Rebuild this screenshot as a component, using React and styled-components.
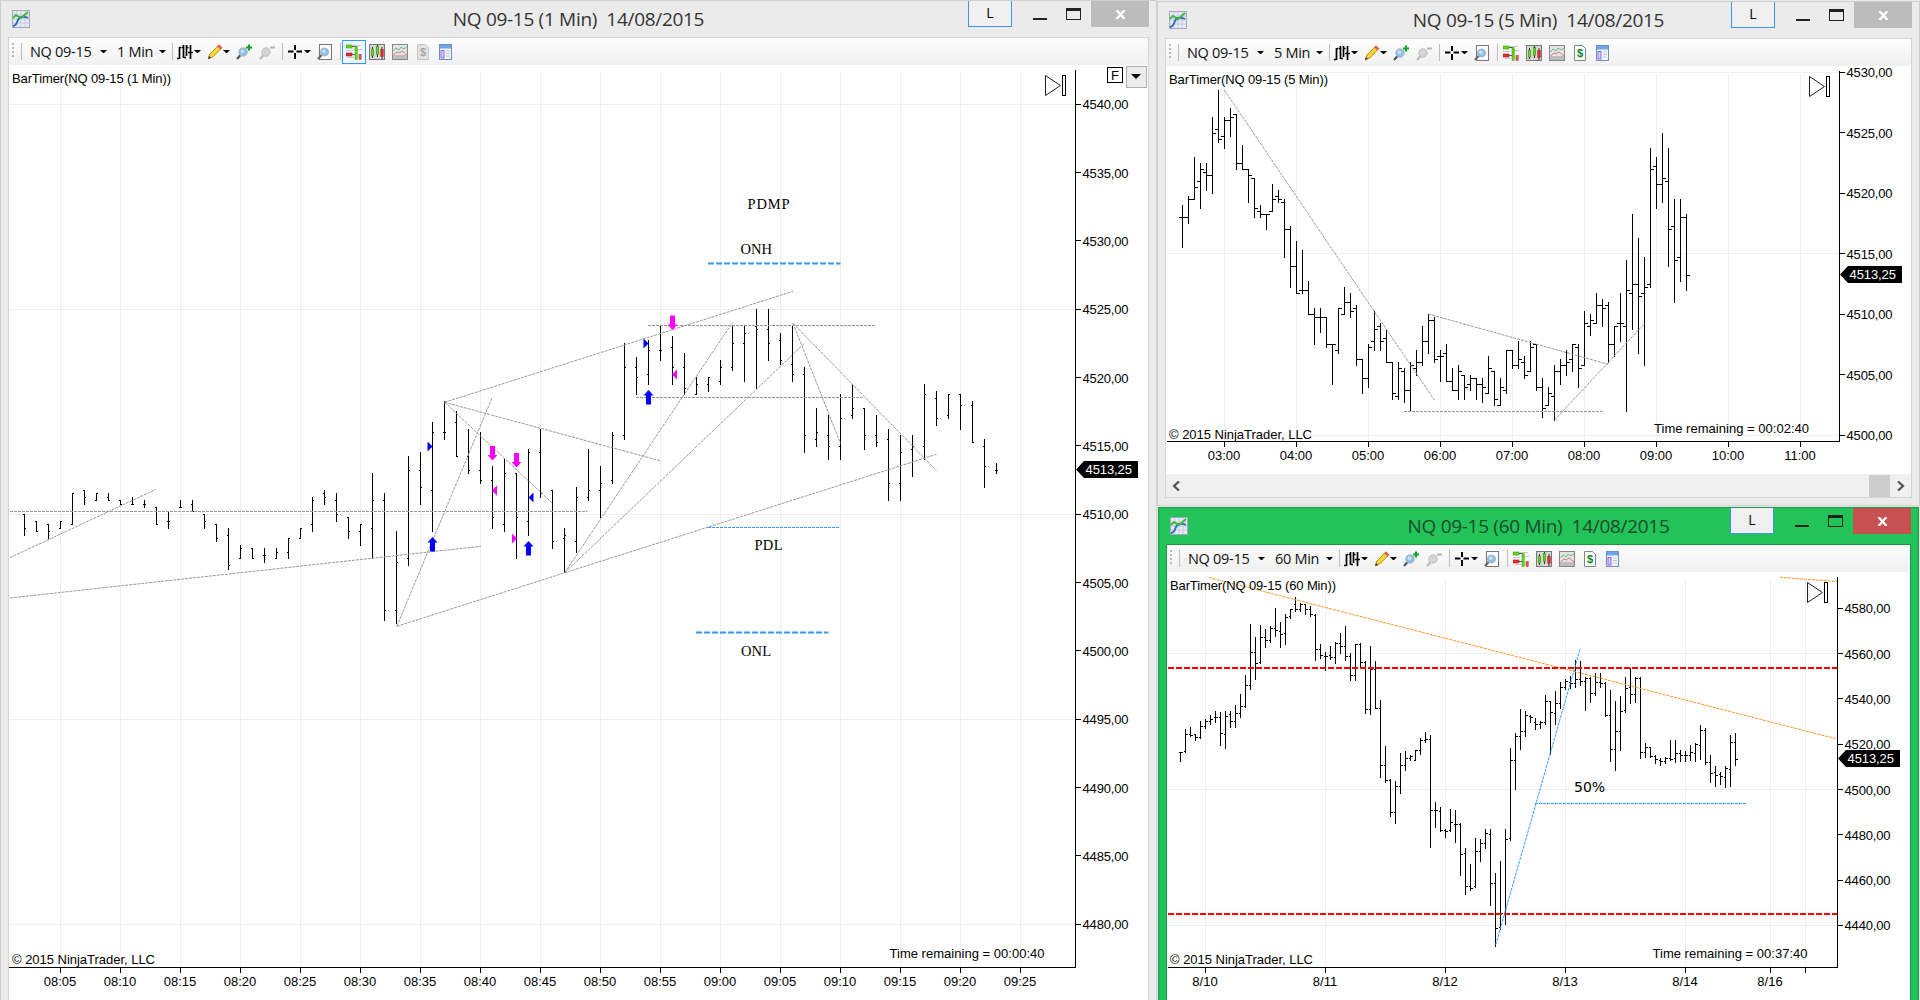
import React from "react"

import styled, { createGlobalStyle, css } from "styled-components"

/* bars are [high, low, open, close] */

// points above / below 4510
const bars1 = [
  [0, -1.5, 0, -1], [-0.5, -1.25, -0.5, -1.25], [-0.75, -1.75, -0.75, -1.25], [-0.5, -1, -1, -0.5],
  [1.5, -0.75, -0.75, 1.5], [1.75, 0.75, 1.75, 1.25], [1.5, 1, 1, 1.5], [1.5, 1, 1.25, 1],
  [1, 0.75, 1, 0.75], [1.25, 0.75, 0.75, 0.75], [1, 0.5, 0.75, 0.75], [0.5, -0.75, 0.5, -0.75],
  [0.25, -1, -0.5, -0.5], [1, 0.5, 0.5, 0.5], [1, 0.25, 0.75, 0.25], [0, -1, 0, -0.5],
  [-0.75, -2, -0.75, -1.75], [-1, -4, -1.5, -3.75], [-2.25, -3.25, -3.25, -2.5], [-2.5, -3.25, -2.5, -3.25],
  [-2.5, -3.5, -3, -3], [-2.5, -3.25, -3.25, -2.75], [-1.75, -3.25, -2.75, -1.75], [-1, -1.75, -1.75, -1],
  [1.25, -1.25, -0.75, 1], [1.75, 0.75, 1.5, 1.25], [1.5, -0.5, 1, 0], [-0.25, -1.75, -0.25, -1.25],
  [-0.75, -2.25, -1.25, -0.75], [3, -3.25, -1, 1], [1.5, -7.75, 1, -7], [-1.25, -8, -7, -3.5],
  [4.25, -3.75, -3.25, 3.25], [4.5, 0.75, 3.25, 2], [6.75, -1.25, 1.75, 6], [8.25, 5.5, 6, 6],
  [7.5, 4.25, 6.75, 4.25], [6.25, 3, 4.25, 3.25], [6, 2.25, 3.25, 2.5], [3.5, -1, 2.5, -0.25],
  [4, -1.25, -0.75, 3], [3, -3.25, 3, -0.25], [4.75, -1.5, -0.5, 4.5], [6.25, 1.25, 4.5, 1.5],
  [1.75, -2.5, 1.75, -2], [-1, -4.25, -1.75, -1.5], [2, -2.75, -2, 1.25], [4.75, 1, 1.25, 1.75],
  [3.5, -0.25, 1.75, 2.25], [6, 2.25, 2.5, 5.75], [12.5, 5.5, 5.75, 10.75], [11.5, 8.75, 10.75, 10],
  [12.75, 9.5, 10.25, 12], [13.75, 11.25, 12, 12], [13, 9.5, 12.25, 10.75], [11.75, 8.75, 10.75, 9.25],
  [10, 8.75, 8.75, 9.5], [10, 9, 9.5, 10], [11.25, 9.5, 9.75, 10.75], [13.75, 10.5, 10.75, 12.5],
  [13.75, 9.75, 12.5, 13.25], [15, 9.25, 13.75, 13.5], [15, 11.25, 13.5, 12.5], [13.25, 11, 12.75, 11.25],
  [13.75, 9.75, 11, 10.25], [10.75, 4.5, 10.25, 5.75], [7.75, 5, 5.5, 6], [7.25, 4, 5.75, 5],
  [8.75, 4, 5, 7], [9.5, 7, 7.25, 7.75], [7.75, 4.75, 7.75, 5.75], [7.25, 5, 5.75, 5.25],
  [6.25, 1, 5.5, 2.25], [5.75, 1, 2.25, 4.5], [5.75, 2.75, 4.75, 5], [9.5, 4, 5, 8.75],
  [9, 6.5, 8.5, 7], [8.75, 7, 7.25, 8.75], [8.75, 6.25, 8.75, 8], [8.25, 5.25, 8, 5.25],
  [5.5, 2, 5, 3.5], [3.75, 3, 3.25, 3.25],
]

// points above 4500
const bars5 = [
  [19, 15.5, 18, 18], [19.75, 17.5, 18, 19.5], [23, 19.5, 19.5, 20.5], [22.5, 18.75, 21, 22],
  [22.5, 20.25, 21.75, 21.5], [26.25, 20, 21.5, 25], [28.5, 24.25, 25.25, 24.5], [26.25, 23.75, 24.75, 26],
  [27, 24.75, 26, 26.25], [26.5, 22, 26.5, 22.5], [24, 22, 22.5, 22], [22, 19.25, 22, 21.5],
  [21.25, 18, 21.25, 18.75], [19, 18, 18.5, 18.25], [18.25, 17, 18.25, 18.25], [20.75, 18.5, 18.5, 19.5],
  [20.25, 19.25, 19.75, 19.5], [19.5, 14.75, 19.25, 17], [17.25, 12.25, 17, 14], [16, 11.75, 14, 11.75],
  [15.25, 11.75, 12, 12], [12.75, 10, 12, 10], [10.5, 7.5, 10, 9.75], [10.5, 8.5, 9.75, 9.75],
  [9.75, 7.25, 9.75, 7.5], [7.5, 4.25, 7.5, 7.5], [10.5, 6.75, 7, 10.5], [12.25, 10, 10, 11],
  [11.75, 9.75, 11, 10.25], [10.75, 5.75, 10.5, 6.25], [6.25, 3.5, 6.25, 4.75], [7.5, 4, 4.75, 7.25],
  [10.25, 7, 7.75, 8.75], [9.25, 7, 9, 7.75], [8.75, 6, 8, 6], [6, 3, 6, 3.5],
  [6, 3, 3.25, 5.5], [5.5, 2.75, 5.25, 3.75], [6, 2, 3.75, 5.75], [7, 5, 5.5, 6],
  [9, 5.75, 6, 7.75], [10, 6.75, 7.75, 9.5], [9.75, 6, 9.5, 6.25], [7, 4.5, 6.5, 6.5],
  [7.5, 4.5, 6.75, 4.5], [5.5, 3.75, 4.5, 3.75], [5.75, 3, 3.75, 5.25], [5, 3, 5, 4],
  [5, 3.75, 4.25, 4.75], [4.75, 3, 4.75, 4.25], [4.75, 2.75, 4.25, 4], [6.5, 3.5, 3.5, 5.5],
  [5.25, 2.5, 5.25, 3], [4.75, 2.5, 2.5, 4], [7, 3.5, 3.75, 7], [7, 5.5, 7, 5.75],
  [7.75, 5.5, 5.75, 6.25], [6.5, 4.75, 6, 5], [7.75, 5.25, 5.25, 7.25], [7.5, 3.75, 7.5, 4],
  [4.75, 1.5, 4, 2.25], [4, 2.5, 2.5, 3.5], [5.75, 1.25, 3.25, 5.25], [6.25, 4.25, 5.25, 5.75],
  [7, 5, 5.75, 6], [7.5, 5.25, 6.25, 7.5], [7.5, 4, 7.25, 5.5], [10.25, 5.75, 5.75, 9.25],
  [10, 8.25, 9, 9.5], [11.75, 9.25, 9.25, 10.75], [11.25, 9, 10.75, 10.5], [11, 6, 10.75, 7.5],
  [9, 6.5, 7.5, 9], [11.75, 7.75, 9.25, 9.25], [14.5, 2, 9, 12], [18.25, 8.75, 11.75, 12.5],
  [16.25, 6.75, 12.5, 11.5], [14.75, 5.75, 11.75, 12.25], [23.75, 12.25, 12.5, 22], [23, 18.75, 22.25, 20.75],
  [25, 19.25, 20.75, 21.25], [23.75, 14, 21, 17], [19.5, 11, 17.25, 14.5], [19.5, 12.75, 14.75, 18],
  [18.25, 12, 18, 13.25],
]

// offsets from the top of the plot, in thirds of a pixel
const bars60 = [
  [515, 542, 517, 515], [447, 517, 512, 463], [441, 467, 463, 465], [463, 479, 463, 472],
  [423, 473, 472, 439], [417, 443, 438, 422], [405, 433, 422, 416], [393, 425, 412, 411],
  [396, 494, 411, 460], [394, 503, 463, 409], [394, 441, 403, 424], [376, 441, 424, 400],
  [343, 411, 400, 377], [285, 380, 379, 316], [132, 326, 316, 217], [171, 296, 217, 250],
  [135, 248, 247, 170], [147, 200, 170, 181], [138, 185, 181, 145], [85, 167, 145, 150],
  [126, 200, 152, 162], [102, 192, 160, 110], [88, 113, 109, 88], [52, 93, 72, 86],
  [69, 93, 86, 73], [72, 101, 73, 86], [78, 107, 86, 103], [102, 239, 106, 206],
  [192, 233, 206, 226], [217, 269, 227, 227], [197, 238, 226, 232], [187, 248, 230, 190],
  [160, 218, 190, 198], [138, 239, 199, 229], [219, 299, 229, 286], [192, 299, 286, 193],
  [188, 262, 193, 247], [243, 398, 247, 388], [199, 401, 388, 267], [243, 385, 267, 385],
  [361, 590, 385, 556], [498, 607, 556, 601], [597, 707, 600, 697], [603, 728, 697, 619],
  [519, 638, 619, 556], [513, 569, 556, 535], [526, 539, 535, 528], [511, 541, 541, 511],
  [475, 523, 511, 480], [457, 487, 480, 478], [464, 800, 478, 691], [667, 740, 691, 691],
  [681, 753, 694, 751], [747, 772, 751, 753], [686, 752, 751, 727], [690, 785, 732, 733],
  [730, 885, 733, 823], [805, 941, 820, 919], [853, 929, 919, 923], [775, 922, 919, 814],
  [777, 842, 814, 788], [747, 805, 788, 760], [747, 974, 763, 910], [880, 1097, 910, 1043],
  [843, 1047, 1041, 998], [747, 1031, 998, 778], [504, 779, 775, 541], [460, 627, 541, 469],
  [387, 506, 469, 454], [393, 467, 454, 406], [405, 425, 409, 410], [414, 448, 427, 433],
  [424, 443, 433, 425], [345, 431, 425, 364], [363, 522, 364, 397], [333, 432, 400, 370],
  [306, 384, 370, 322], [297, 327, 322, 304], [288, 323, 306, 310], [240, 320, 310, 298],
  [243, 315, 298, 303], [292, 390, 303, 295], [291, 365, 295, 340], [279, 345, 340, 307],
  [279, 321, 307, 310], [306, 407, 310, 406], [330, 543, 404, 506], [363, 570, 508, 454],
  [348, 510, 454, 394], [291, 396, 391, 325], [265, 369, 322, 343], [291, 365, 343, 295],
  [291, 533, 295, 515], [489, 530, 515, 502], [500, 530, 502, 529], [526, 548, 529, 538],
  [534, 554, 540, 544], [532, 549, 542, 534], [480, 539, 534, 537], [480, 546, 535, 520],
  [510, 542, 520, 525], [514, 543, 525, 526], [495, 540, 526, 517], [489, 543, 520, 493],
  [435, 537, 496, 451], [444, 552, 451, 547], [525, 606, 547, 580], [558, 617, 577, 584],
  [576, 612, 582, 589], [558, 620, 591, 565], [465, 617, 568, 487], [459, 554, 487, 538],
]

const range = (from, to, step) => {
  const out = []
  for (let v = from; v <= to; v += step) out.push(v)
  return out
}

const clock = mins =>
  `${String(Math.floor(mins / 60)).padStart(2, "0")}:${String(mins % 60).padStart(2, "0")}`

const GREY = "#999"
const BLUE = "#3399ff"
const ORANGE = "#ff9420"

const charts = {
  one: {
    origin: [9, 65],
    size: [1139, 935],
    axis: { x: 1075, y: 967, top: 70, left: 9 },
    gridTop: 73,
    gridX: range(60, 1020, 60),
    gridY: [104, 309, 514, 719, 924],
    times: range(0, 16, 1).map(i => [60 + i * 60, clock(485 + i * 5)]),
    prices: range(0, 12, 1).map(i => [104.3 + i * 68.33, `${4540 - i * 5},00`]),
    flagY: 469.5,
    title: [12, 83, 159],
    copy: [12, 964],
    timer: [889.5, 958, "00:00:40"],
    play: [1045, 75],
    bars: bars1,
    start: 24,
    step: 12,
    ticks: [1, 1],
    toY: v => 514 - v * 13.667,
    lines: [
      [10, 557.7, 156, 489.3], [10, 598, 481, 546.3], [10, 511.5, 587.5, 511.5],
      [444.6, 402.3, 793, 291.3], [444.6, 402.3, 660, 460.7], [444.6, 402.3, 552.5, 503.3],
      [396.8, 626.3, 492, 398], [396.8, 626.3, 936.6, 454.3],
      [564.7, 572.7, 732.6, 322.3], [564.7, 572.7, 804.5, 343.3],
      [648, 325.5, 876, 325.5], [636, 397.5, 864, 397.5],
      [793, 323.3, 840.5, 443.3], [793, 323.3, 936.6, 470.7],
      [708, 527.5, 840, 527.5, BLUE],
      [708, 263.5, 840.5, 263.5, BLUE, 2], [696, 632.5, 828.5, 632.5, BLUE, 2],
    ],
  },
  five: {
    origin: [1166, 66],
    size: [746, 408],
    axis: { x: 1839, y: 441, top: 71, left: 1167 },
    gridTop: 74,
    gridX: range(1224, 1800, 72),
    gridY: [72, 253, 435],
    times: range(0, 8, 1).map(i => [1224 + i * 72, clock((3 + i) * 60)]),
    prices: range(0, 6, 1).map(i => [72.3 + i * 60.5, `${4530 - i * 5},00`]),
    flagY: 274.5,
    title: [1169, 84, 159],
    copy: [1169, 438.5],
    timer: [1654, 432.5, "00:02:40"],
    play: [1809, 76],
    bars: bars5,
    start: 1182,
    step: 6,
    ticks: [3, 3],
    toY: v => 435 - v * 12.1,
    lines: [
      [1224.3, 90, 1434.3, 400], [1428.3, 314, 1608.3, 364.3],
      [1404, 411.5, 1602.5, 411.5], [1554.3, 420.3, 1644.7, 323.3],
    ],
  },
  sixty: {
    origin: [1167, 572],
    size: [743, 428],
    axis: { x: 1837, y: 967, top: 577, left: 1168 },
    gridTop: 580,
    gridX: [1205, 1325, 1445, 1565, 1685, 1770, 1805],
    gridY: [653, 789, 925],
    times: [
      [1205, "8/10"], [1325, "8/11"], [1445, "8/12"], [1565, "8/13"],
      [1685, "8/14"], [1770, "8/16"], [1805, ""],
    ],
    prices: range(0, 7, 1).map(i => [608.3 + i * 45.3, `${4580 - i * 20},00`]),
    flagY: 758.5,
    title: [1170, 590, 166],
    copy: [1170, 964],
    timer: [1652.5, 958, "00:37:40"],
    play: [1807, 582],
    bars: bars60,
    start: 1180,
    step: 5,
    ticks: [1, 2],
    toY: v => 580 + v / 3,
    lines: [
      [1209, 577.5, 1837, 739, ORANGE], [1780, 577.3, 1837, 581.5, ORANGE],
      [1168, 668, 1837, 668, "#ff0000", 2], [1168, 914, 1837, 914, "#ff0000", 2],
      [1495.7, 944.7, 1580.3, 648.3, BLUE], [1535, 803.5, 1746, 803.5, BLUE],
    ],
  },
}

/* ohlc bars as a single path */
const barPath = ({ bars, start, step, ticks, toY }) =>
  bars
    .map(([h, l, o, c], i) => {
      const x = start + i * step
      const [yh, yl, yo, yc] = [h, l, o, c].map(v => Math.round(toY(v)))
      return `M${x + 0.5} ${yh}V${yl + 1}M${x - ticks[0]} ${yo + 0.5}H${x}M${x + 1} ${yc + 0.5}h${ticks[1]}`
    })
    .join("")

const Chart = ({ chart, period, children }) => {
  const { origin, size, axis, title, copy, timer, play, flagY } = chart
  return (
    <Plot width={size[0]} height={size[1]} viewBox={`${origin[0]} ${origin[1]} ${size[0]} ${size[1]}`}>
      <g stroke="#efefef" shapeRendering="crispEdges">
        {chart.gridX.map(x => (
          <line key={x} x1={x + 0.5} x2={x + 0.5} y1={chart.gridTop} y2={axis.y} />
        ))}
        {chart.gridY.map(y => (
          <line key={y} x1={axis.left + 1} x2={axis.x} y1={y + 0.5} y2={y + 0.5} />
        ))}
      </g>
      <path d={barPath(chart)} stroke="#000" fill="none" shapeRendering="crispEdges" />
      {chart.lines.map(([x1, y1, x2, y2, color = GREY, width = 1], i) => (
        <line
          key={i}
          x1={x1}
          y1={y1}
          x2={x2}
          y2={y2}
          stroke={color}
          strokeWidth={width}
          strokeDasharray={width === 2 ? "6 2" : "3 1"}
        />
      ))}
      {children}
      <path
        d={`M${axis.x + 0.5} ${axis.top}V${axis.y + 1}M${axis.left} ${axis.y + 0.5}H${axis.x}`}
        stroke="#000"
        shapeRendering="crispEdges"
      />
      {chart.times.map(([x, label]) => (
        <g key={x}>
          <rect x={x} y={axis.y} width="1" height="6" />
          <text x={x} y={axis.y + 19} textAnchor="middle">
            {label}
          </text>
        </g>
      ))}
      {chart.prices.map(([y, label]) => (
        <g key={label}>
          <rect x={axis.x} y={Math.floor(y)} width="6" height="1" />
          <text x={axis.x + 7.5} y={Math.round(y) + 5} textLength="46">
            {label}
          </text>
        </g>
      ))}
      <path d={`M${axis.x + 1} ${flagY}l8 -8.5h54v17h-54z`} />
      <text x={axis.x + 10.5} y={flagY + 4.5} textLength="46.5" fill="#fff">
        4513,25
      </text>
      <text x={title[0]} y={title[1]} textLength={title[2]}>
        BarTimer(NQ 09-15 ({period}))
      </text>
      <text x={copy[0]} y={copy[1]} textLength="143">
        © 2015 NinjaTrader, LLC
      </text>
      <text x={timer[0]} y={timer[1]} textLength="155">
        Time remaining = {timer[2]}
      </text>
      <g transform={`translate(${play[0]} ${play[1]})`} fill="none" stroke="#222">
        <path d="M.5 .5V20.5L15.5 10.5z" />
        <rect x="17.5" y=".5" width="3" height="20" stroke="#000" />
      </g>
    </Plot>
  )
}

const UpArrow = ({ x, y }) => <path fill="#0000ff" d={`M${x} ${y}l5 5.5h-2.5v9h-5v-9h-2.5z`} />
const DownArrow = ({ x, y }) => <path fill="#ff00ff" d={`M${x} ${y}l5 -5.5h-2.5v-9h-5v9h-2.5z`} />
/* small fill markers: dir 1 points right, -1 points left */
const Fill = ({ x, y, dir, color }) => <path fill={color} d={`M${x} ${y}l${-5 * dir} -5v10z`} />

const AppIcon = () => (
  <svg width="18" height="18" viewBox="0 0 18 18">
    <rect x=".5" y=".5" width="17" height="17" fill="#e6eaf6" stroke="#a3a8bd" />
    <path d="M1 5h16M1 9h16M1 13h16M5 1v16M9 1v16M13 1v16" stroke="#bcc4dd" strokeWidth=".8" />
    <path d="M1 16c5 0 4-9 8-9s4-1 7 1" fill="none" stroke="#2d6cb5" strokeWidth="1.8" />
    <path d="M1 8l3-3 3 2 2 1 7-6" fill="none" stroke="#45b83c" strokeWidth="2" />
  </svg>
)

const Lens = ({ faded, sign }) => (
  <svg width="16" height="16" viewBox="0 0 16 16">
    <path d="M1 15l4-4.5" stroke={faded ? "#bbb" : "#555"} strokeWidth="2.2" />
    <circle cx="7" cy="8" r="4.2" fill={faded ? "#d4d4d4" : "#8dc0ea"} stroke={faded ? "#c2c2c2" : "#a9b4be"} />
    {!faded && <circle cx="6.4" cy="7.2" r="1.8" fill="#c9e4f8" />}
    {sign === "+" && <path d="M10 3.5h6M13 .5v6" stroke="#11a52c" strokeWidth="2.2" />}
    {sign === "-" && <path d="M11 3.5h5" stroke="#b5b5b5" strokeWidth="2" />}
  </svg>
)

const icons = {
  bars: (
    <path
      d="M2.5 3v12M0 14.5h2M3 3.5h1.5M6.5 1v13M5 3.5h1.5M7 13.5h2M9.5 1v11M9.5 3.5h2M13.5 1v14M11 8.5h2M14 8.5h2"
      stroke="#000"
      strokeWidth="1.7"
      fill="none"
    />
  ),
  pencil: (
    <>
      <path d="M1.5 14.5l1.2-4.2L11 1.8l3 2.8L5.6 13z" fill="#ffd530" stroke="#b08a18" />
      <path d="M10.5 2.2L12 .8l3 2.8-1.5 1.5z" fill="#e4645a" stroke="#b0443c" strokeWidth=".6" />
      <path d="M1 15l1-3 2 2z" fill="#333" />
    </>
  ),
  cross: <path d="M7 1v5M7 9v6M0 7.5h5.5M8.5 7.5H14" stroke="#000" strokeWidth="2" />,
  page: (
    <>
      <rect x="2.5" y=".5" width="12" height="15" fill="#fbfbfb" stroke="#777" />
      <path d="M1 15l4-4.5" stroke="#666" strokeWidth="2.2" />
      <circle cx="7.5" cy="8" r="4" fill="#8dc0ea" stroke="#a9b4be" />
      <circle cx="6.8" cy="7.2" r="1.7" fill="#c9e4f8" />
    </>
  ),
  trader: (
    <>
      <path d="M7 1.500h8M8 5.500h8M0 6.500h7M2 13.500h6" stroke="#c9c9c9" />
      <rect x="0" y="1" width="6" height="3" fill="#5fd81a" stroke="#3f9d10" strokeWidth=".6" />
      <rect x="0" y="9" width="6" height="3" fill="#e62e2e" stroke="#a31717" strokeWidth=".6" />
      <path d="M6 2.500h3.500M6 10.500h3" stroke="#555" />
      <rect x="9" y="2.500" width="2.200" height="13" fill="#5fd81a" stroke="#3f9d10" strokeWidth=".5" />
      <rect x="13" y="10.500" width="2.200" height="5" fill="#e05a4e" stroke="#a33" strokeWidth=".5" />
    </>
  ),
  candles: (
    <>
      <rect x=".5" y=".5" width="15" height="15" fill="#d6d6d6" stroke="#777" />
      <path d="M3.500 3v11M8.500 1v12M13 3v12" stroke="#333" />
      <rect x="2.300" y="5" width="2.400" height="7" fill="#5fd81a" stroke="#397f12" strokeWidth=".5" />
      <rect x="7.300" y="2.500" width="2.400" height="8" fill="#5fd81a" stroke="#397f12" strokeWidth=".5" />
      <rect x="11.800" y="5.500" width="2.400" height="7" fill="#e62e2e" stroke="#8d1515" strokeWidth=".5" />
    </>
  ),
  wave: (
    <>
      <rect x=".5" y=".5" width="15" height="15" fill="#e4e4e4" stroke="#888" />
      <rect x="1" y="11" width="14" height="4" fill="#bdbdbd" />
      <path d="M1.500 7L4 4l3 2 2-3 3 2 3-2" fill="none" stroke="#5cb585" strokeWidth=".9" />
      <path d="M1.500 11L5 8l2 1 3-2 5 4" fill="none" stroke="#e26b6b" strokeWidth=".9" />
    </>
  ),
  panel: (
    <>
      <rect x="1.500" y=".5" width="12" height="15" fill="#f2f6fc" stroke="#6f8fbd" />
      <rect x="2" y="1" width="11" height="3.500" fill="#6ba6ea" />
      <rect x="3" y="6.500" width="3" height="7.500" fill="#d9ccff" stroke="#8e6bf0" />
      <path d="M8 7h4M8 9.500h4M8 12h4" stroke="#bfc7d4" />
    </>
  ),
}

const Icon = ({ name }) => (
  <svg width="16" height="16" viewBox="0 0 16 16">
    {icons[name]}
  </svg>
)

const Dollar = ({ faded }) => (
  <svg width="16" height="16" viewBox="0 0 16 16">
    <path
      d="M2.500 .5h8l3 3v12h-11z"
      fill={faded ? "#e3e3e3" : "#f7fbf7"}
      stroke={faded ? "#c6c6c6" : "#7f8a7f"}
    />
    <DollarSign x="8" y="12" textAnchor="middle" fill={faded ? "#a5a5a5" : "#14822a"}>
      $
    </DollarSign>
  </svg>
)

const Window = ({ title, period, active, depthOn, width, height, children }) => (
  <Frame $active={active} $width={width} $height={height}>
    <TitleBar>
      <AppIcon />
      <Title $active={active}>{title}</Title>
      <Controls>
        <LinkButton $active={active}>L</LinkButton>
        <Minimize />
        <Maximize />
        <Close $active={active}>
          <svg width="11" height="9" viewBox="0 0 11 9">
            <path d="M1.500 0l8 9M9.500 0l-8 9" stroke="#fff" strokeWidth="2.300" />
          </svg>
        </Close>
      </Controls>
    </TitleBar>
    <Body $active={active}>
      <Toolbar>
        <Grip />
        <Separator $left={7} />
        <Label $left={8} $width={63}>
          NQ 09-15
        </Label>
        <Caret $left={7} />
        <Label $left={10} $width={period.length > 5 ? 44 : 35}>
          {period}
        </Label>
        <Caret $left={7} />
        <Separator $left={6} />
        <Tool $left={4}>
          <Icon name="bars" />
        </Tool>
        <Caret $left={1} />
        <Tool $left={6}>
          <Icon name="pencil" />
        </Tool>
        <Caret $left={0} />
        <Tool $left={6}>
          <Lens sign="+" />
        </Tool>
        <Tool $left={7}>
          <Lens faded sign="-" />
        </Tool>
        <Separator $left={7} />
        <Tool $left={5}>
          <Icon name="cross" />
        </Tool>
        <Caret $left={0} />
        <Tool $left={6}>
          <Icon name="page" />
        </Tool>
        <Separator $left={7} />
        <Tool $left={5} $selected={depthOn}>
          <Icon name="trader" />
        </Tool>
        <Tool $left={7}>
          <Icon name="candles" />
        </Tool>
        <Tool $left={7}>
          <Icon name="wave" />
        </Tool>
        <Tool $left={7}>
          <Dollar faded={depthOn} />
        </Tool>
        <Tool $left={7}>
          <Icon name="panel" />
        </Tool>
      </Toolbar>
      {children}
    </Body>
  </Frame>
)

const App = () => (
  <>
    <GlobalStyle />
    <Desktop>
      <Window title="NQ 09-15 (1 Min)  14/08/2015" period="1 Min" width={1157} height={1010} depthOn>
        <Chart chart={charts.one} period="1 Min">
          <UpArrow x={432.5} y={537} />
          <UpArrow x={528.5} y={541} />
          <UpArrow x={648.5} y={390} />
          <DownArrow x={492.5} y={460.5} />
          <DownArrow x={516.5} y={467.5} />
          <DownArrow x={672.5} y={330} />
          <Fill x={432.5} y={446.5} dir={1} color="#0000ff" />
          <Fill x={528.5} y={497.5} dir={-1} color="#0000ff" />
          <Fill x={648.5} y={343.5} dir={1} color="#0000ff" />
          <Fill x={492} y={490.5} dir={-1} color="#ff00ff" />
          <Fill x={517} y={538.5} dir={1} color="#ff00ff" />
          <Fill x={672} y={374.5} dir={-1} color="#ff00ff" />
          <Note x="747.5" y="209" textLength="42">
            PDMP
          </Note>
          <Note x="740.5" y="254" textLength="31.5">
            ONH
          </Note>
          <Note x="754.5" y="550" textLength="28">
            PDL
          </Note>
          <Note x="741" y="656" textLength="30">
            ONL
          </Note>
          <g shapeRendering="crispEdges">
            <rect x="1107.5" y="67.5" width="15" height="15" fill="#fff" stroke="#000" />
            <rect x="1126.5" y="66.5" width="20" height="21" fill="#ececec" stroke="#adadad" />
          </g>
          <text x="1111" y="80">
            F
          </text>
          <path d="M1131 74h10l-5 5z" />
        </Chart>
      </Window>
      <Column>
        <Window title="NQ 09-15 (5 Min)  14/08/2015" period="5 Min" width={763} height={505}>
          <Chart chart={charts.five} period="5 Min" />
          <Scrollbar>
            <svg width="8" height="10" viewBox="0 0 8 10">
              <path d="M7 .5L2 5l5 4.500" fill="none" stroke="#505050" strokeWidth="2.200" />
            </svg>
            <Thumb />
            <svg width="8" height="10" viewBox="0 0 8 10">
              <path d="M1 .5L6 5 1 9.500" fill="none" stroke="#505050" strokeWidth="2.200" />
            </svg>
          </Scrollbar>
        </Window>
        <ActiveSlot>
          <Window title="NQ 09-15 (60 Min)  14/08/2015" period="60 Min" width={761} height={510} active>
            <Chart chart={charts.sixty} period="60 Min">
              <Percent x="1574" y="791.5">
                50%
              </Percent>
            </Chart>
          </Window>
        </ActiveSlot>
      </Column>
    </Desktop>
  </>
)

const GlobalStyle = createGlobalStyle`
  * {
    box-sizing: border-box;
  }
  body {
    margin: 0;
    overflow: hidden;
    background: #ebebeb;
  }
  svg {
    display: block;
    flex: none;
  }
`

const Desktop = styled.div`
  display: flex;
  align-items: flex-start;
  width: 1920px;
  height: 1000px;
  overflow: hidden;
  background: #ebebeb;
`

const Column = styled.div`
  display: flex;
  flex-direction: column;
  padding-top: 1px;
`

const ActiveSlot = styled.div`
  padding: 1px 1px 0;
`

const Frame = styled.section`
  flex: none;
  display: flex;
  flex-direction: column;
  width: ${p => p.$width}px;
  height: ${p => p.$height}px;
  padding: 0 7px 7px;
  border: 1px solid ${p => (p.$active ? "#1f9447" : "#cfcfcf")};
  background: ${p => (p.$active ? "#22c358" : "#ebebeb")};
`

const TitleBar = styled.header`
  flex: none;
  height: 36px;
  display: grid;
  grid-template-columns: 1fr auto 1fr;
  align-items: start;

  > svg {
    margin: 9px 0 0 4px;
  }
`

const Title = styled.h1`
  margin: 0;
  padding-top: 4px;
  font: 400 19px/28px "Open Sans", "Noto Sans", sans-serif;
  letter-spacing: -0.3px;
  white-space: pre;
  color: ${p => (p.$active ? "#1c4a2b" : "#333")};
`

const Controls = styled.div`
  display: flex;
  justify-content: flex-end;
  align-items: flex-start;
`

const LinkButton = styled.button`
  width: 44px;
  height: 26px;
  margin-right: 21px;
  padding: 0 0 3px;
  border: 1px solid #3c96f0;
  border-top: 0;
  background: #f0f0f0;
  font: 14px "Open Sans", sans-serif;
  color: #000;
`

const Minimize = styled.i`
  width: 14px;
  height: 2px;
  margin: 17px 19px 0 0;
  background: #222;
`

const Maximize = styled.i`
  width: 15px;
  height: 12px;
  margin: 7px 10px 0 0;
  border: 1px solid #222;
  border-top-width: 3px;
`

const Close = styled.div`
  display: flex;
  justify-content: center;
  align-items: center;
  width: 58px;
  height: 26px;
  background: ${p => (p.$active ? "#c75050" : "#bcbcbc")};
`

const Body = styled.div`
  flex: 1;
  display: flex;
  flex-direction: column;
  overflow: hidden;
  border: 1px solid ${p => (p.$active ? "#1f9447" : "#d4d4d4")};
  background: #fff;
`

const Toolbar = styled.div`
  flex: none;
  display: flex;
  align-items: center;
  height: 27px;
  padding: 0 0 0 3px;
  background: linear-gradient(#fdfdfd, #f0f0f0);
  border-radius: 0 0 3px 3px;
`

const Grip = styled.i`
  width: 2px;
  height: 15px;
  margin-bottom: 3px;
  background: repeating-linear-gradient(#b9b9b9 0 2px, transparent 2px 4px);
`

const Separator = styled.i`
  width: 1px;
  height: 17px;
  margin-left: ${p => p.$left}px;
  background: #bdbdbd;
`

const Label = styled.span`
  width: ${p => p.$width}px;
  margin-left: ${p => p.$left}px;
  font: 14.5px/27px "Open Sans", "Noto Sans", sans-serif;
  letter-spacing: -0.3px;
  white-space: nowrap;
  color: #111;
`

const Caret = styled.i`
  width: 7px;
  height: 0;
  margin-left: ${p => p.$left}px;
  border: solid transparent;
  border-width: 3px 3px 0;
  border-top-color: #000;
`

const Tool = styled.span`
  display: block;
  width: 16px;
  height: 16px;
  margin-left: ${p => p.$left}px;

  ${p =>
    p.$selected &&
    css`
      outline: 1px solid #3399ff;
      outline-offset: 3px;
      background: #eef5fc;
      box-shadow: 0 0 0 3px #eef5fc;
    `}
`

const Plot = styled.svg`
  font: 13px "Liberation Sans", Arial, sans-serif;
`

const Note = styled.text`
  font: 14.5px "Liberation Serif", serif;
`

const Percent = styled.text`
  font: 14px "DejaVu Sans", sans-serif;
`

const DollarSign = styled.text`
  font: bold 11px "Liberation Sans", Arial, sans-serif;
`

const Scrollbar = styled.div`
  flex: 1;
  display: flex;
  align-items: center;
  padding: 0 6px;
  background: #f0f0f0;
`

const Thumb = styled.div`
  width: 21px;
  height: 22px;
  margin: 0 7px 0 auto;
  background: #cdcdcd;
`

export default App
